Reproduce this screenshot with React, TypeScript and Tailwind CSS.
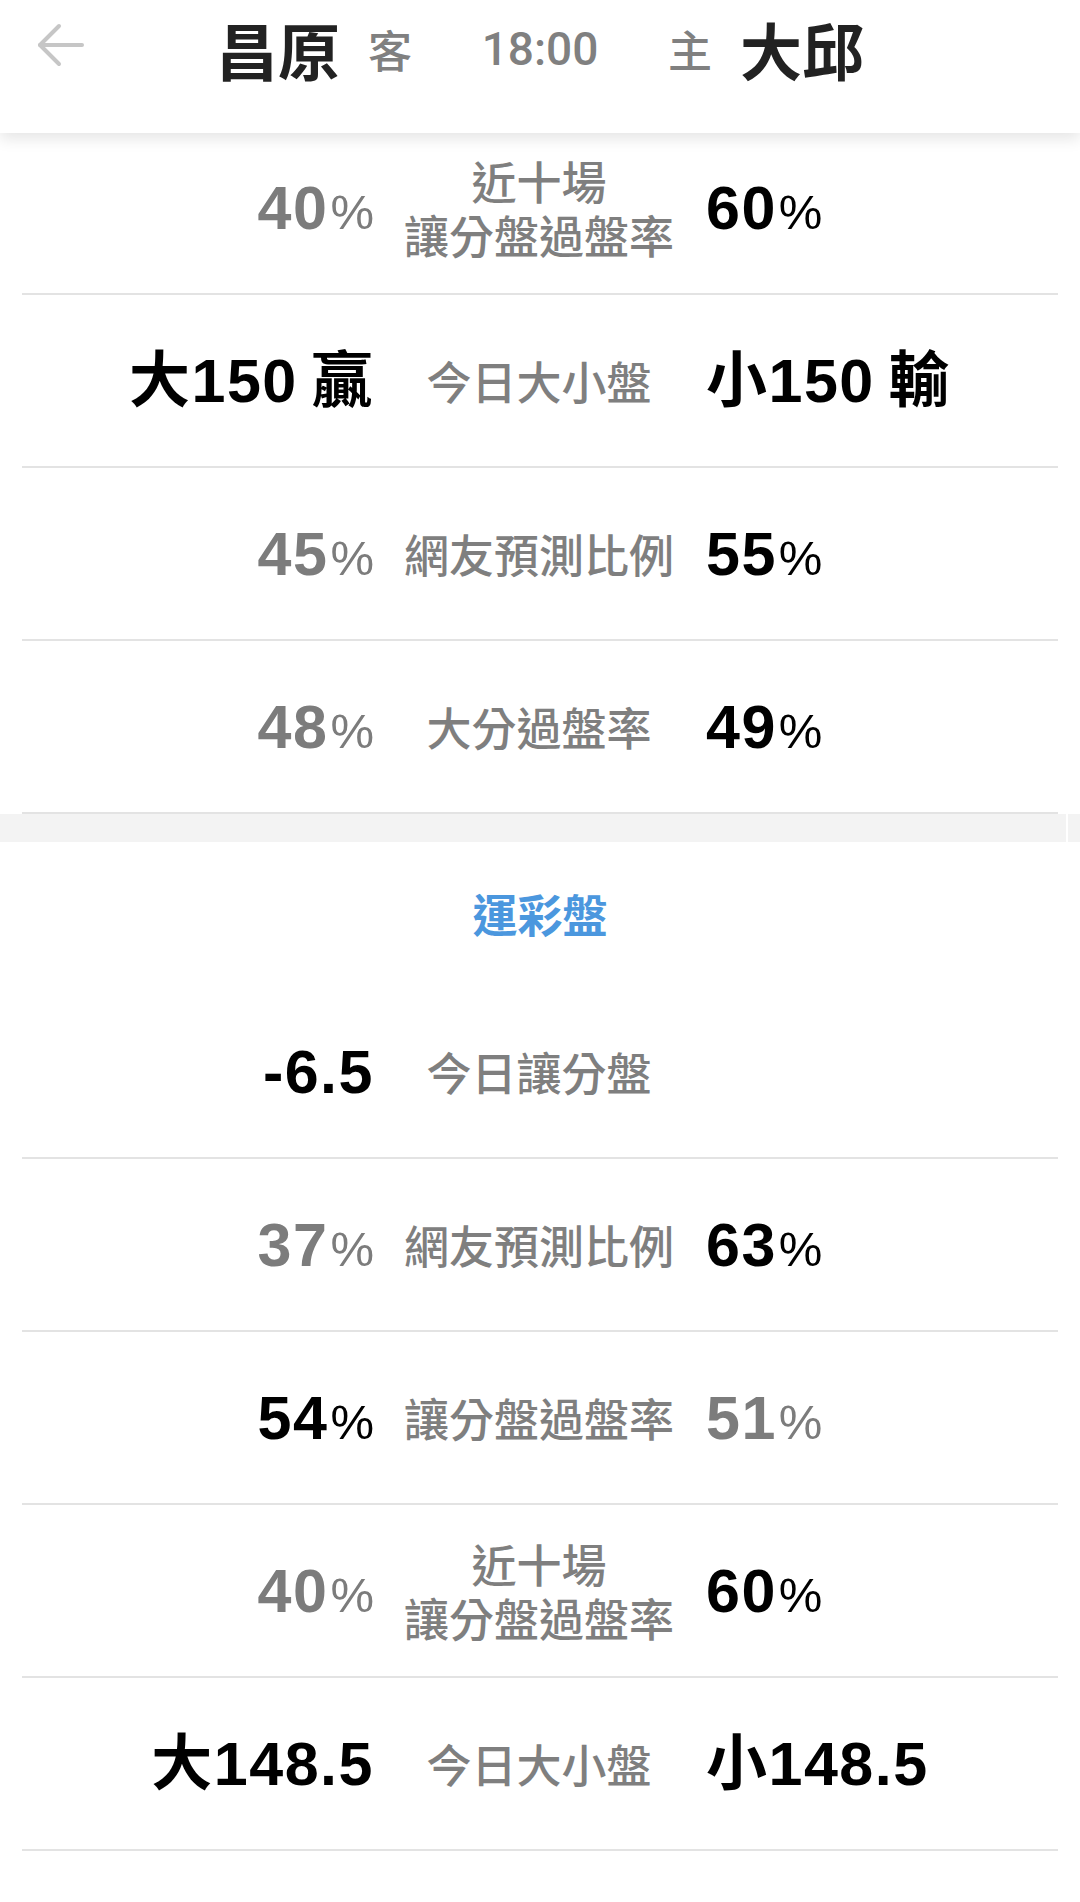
import React from 'react';

type Cell = { text: string; pct?: boolean; dark?: boolean } | null;
type Row = { left: Cell; label: string[]; right: Cell };

const handicapRows: Row[] = [
  { left: { text: '40', pct: true }, label: ['近十場', '讓分盤過盤率'], right: { text: '60', pct: true, dark: true } },
  { left: { text: '大150\u2009贏', dark: true }, label: ['今日大小盤'], right: { text: '小150\u2009輸', dark: true } },
  { left: { text: '45', pct: true }, label: ['網友預測比例'], right: { text: '55', pct: true, dark: true } },
  { left: { text: '48', pct: true }, label: ['大分過盤率'], right: { text: '49', pct: true, dark: true } },
];

const lotteryRows: Row[] = [
  { left: { text: '-6.5', dark: true }, label: ['今日讓分盤'], right: null },
  { left: { text: '37', pct: true }, label: ['網友預測比例'], right: { text: '63', pct: true, dark: true } },
  { left: { text: '54', pct: true, dark: true }, label: ['讓分盤過盤率'], right: { text: '51', pct: true } },
  { left: { text: '40', pct: true }, label: ['近十場', '讓分盤過盤率'], right: { text: '60', pct: true, dark: true } },
  { left: { text: '大148.5', dark: true }, label: ['今日大小盤'], right: { text: '小148.5', dark: true } },
];

const Value = ({ cell }: { cell: Cell }) => {
  if (!cell) return null;
  return (
    <span
      className={`flex items-baseline font-['Liberation_Sans','Noto_Sans_CJK_TC',sans-serif] ${
        cell.dark ? 'text-black' : 'text-[#7c7c7c]'
      }`}
    >
      <span className="text-[61px] font-bold leading-none tracking-[1.5px]">{cell.text}</span>
      {cell.pct && <span className="ml-[2px] text-[49px] leading-none">%</span>}
    </span>
  );
};

const StatRow = ({ row }: { row: Row }) => (
  <div className="flex h-[173px] items-center border-b-2 border-[#e3e3e3]">
    <div className="flex flex-1 justify-end pt-[2px]">
      <Value cell={row.left} />
    </div>
    <div className="w-[330px] text-center font-['Noto_Sans_CJK_TC',sans-serif] text-[45px] font-medium leading-[54px] text-[#7f7f7f]">
      {row.label.map((line) => (
        <div key={line}>{line}</div>
      ))}
    </div>
    <div className="flex flex-1 justify-start pt-[2px] pl-[2px]">
      <Value cell={row.right} />
    </div>
  </div>
);

const BackArrow = () => (
  <svg width="48" height="44" viewBox="0 0 48 44" fill="none" className="mb-[8px] shrink-0">
    <polyline
      points="22,3 3,22 22,41"
      stroke="#c6c6c6"
      strokeWidth="4"
      strokeLinecap="round"
      strokeLinejoin="round"
    />
    <line x1="3" y1="22" x2="45" y2="22" stroke="#c6c6c6" strokeWidth="4" strokeLinecap="round" />
  </svg>
);

export default function App() {
  return (
    <div className="min-h-[1902px] w-[1080px] overflow-hidden bg-white">
      {/* Match header */}
      <header className="relative z-10 h-[133px] bg-white shadow-[0_6px_14px_rgba(0,0,0,0.10)]">
        <div className="flex h-[98px] items-center">
          <div className="flex w-[412px] items-center justify-between pl-[37px]">
            <BackArrow />
            <div className="flex items-center gap-[28px] font-['Noto_Sans_CJK_TC',sans-serif] leading-none">
              <span className="text-[62px] font-bold text-[#222]">昌原</span>
              <span className="text-[44px] font-medium text-[#808080]">客</span>
            </div>
          </div>
          <div className="w-[256px] text-center font-['Roboto',sans-serif] text-[46px] font-medium leading-none text-[#808080]">
            18:00
          </div>
          <div className="flex w-[412px] items-center gap-[28px] font-['Noto_Sans_CJK_TC',sans-serif] leading-none">
            <span className="text-[44px] font-medium text-[#808080]">主</span>
            <span className="text-[62px] font-bold text-[#222]">大邱</span>
          </div>
        </div>
      </header>

      {/* Handicap section */}
      <div className="-mt-[11px] mx-[22px]">
        {handicapRows.map((row, i) => (
          <StatRow key={i} row={row} />
        ))}
      </div>

      <div className="flex h-[28px]">
        <div className="flex-1 bg-[#f3f3f3]" />
        <div className="w-[2px] bg-white" />
        <div className="w-[12px] bg-[#f3f3f3]" />
      </div>

      {/* Sports lottery section */}
      <div className="flex h-[144px] items-center justify-center font-['Noto_Sans_CJK_TC',sans-serif] text-[45px] font-semibold text-[#4b97de]">
        運彩盤
      </div>
      <div className="mx-[22px]">
        {lotteryRows.map((row, i) => (
          <StatRow key={i} row={row} />
        ))}
      </div>
    </div>
  );
}
